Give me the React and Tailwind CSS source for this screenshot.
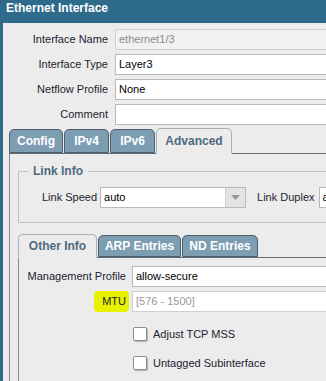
import React from 'react';

const Field = ({ label, value, disabled, placeholder }) => (
  <div className="flex items-center h-[21px]">
    <div className="w-[105px] shrink-0 text-right whitespace-nowrap text-[#23232f]">{label}</div>
    <div
      className={`ml-[7px] h-[21px] w-[240px] shrink-0 border flex items-center pl-[3px] ${
        disabled ? 'bg-[#f1f1f1] border-[#cfcfcf] text-[#8c8c8c]' : 'bg-white border-[#b9b9b9] text-black'
      }`}
    >
      {value || <span className="text-[#9a9a9a]">{placeholder}</span>}
    </div>
  </div>
);

const Tab = ({ label, active, width, tall }) => (
  <div
    className={`flex items-center justify-center rounded-t-[5px] border font-bold text-[12px] shrink-0 whitespace-nowrap ${
      active
        ? `bg-[#ececec] border-[#a9b2b8] border-b-[#ececec] text-[#4e6a80] -mb-px ${tall ? 'h-[26px]' : 'h-[24px]'}`
        : `bg-[#7d9db3] border-[#4f5e68] text-white ${tall ? 'h-[24px]' : 'h-[22px]'}`
    }`}
    style={{ width }}
  >
    {label}
  </div>
);

const Checkbox = ({ label }) => (
  <div className="flex items-center h-[16px]">
    <div className="w-[14px] h-[14px] shrink-0 bg-white border border-[#8d8d8d] rounded-[2px] shadow-[1px_1px_1px_rgba(0,0,0,0.25)]" />
    <span className="ml-[6px] whitespace-nowrap text-[#23232f]">{label}</span>
  </div>
);

export default function App() {
  return (
    <div
      className="w-[326px] h-[381px] overflow-hidden bg-[#2e6a8a] flex flex-col text-[11px] leading-[13px]"
      style={{ fontFamily: '"Liberation Sans", Arial, sans-serif' }}
    >
      <div className="h-[23px] shrink-0 pl-[6px] pt-[1px] text-white font-bold text-[12px] leading-[14px]">
        Ethernet Interface
      </div>

      <div className="flex-1 ml-[3px] bg-[#ececec] pt-[6px] overflow-hidden">
        <div className="flex flex-col gap-[4px]">
          <Field label="Interface Name" value="ethernet1/3" disabled />
          <Field label="Interface Type" value="Layer3" />
          <Field label="Netflow Profile" value="None" />
          <Field label="Comment" value="" />
        </div>

        <div className="mt-[3px] ml-[6px]">
          <div className="flex items-end gap-[1px] h-[26px] border-b border-[#5d6c76]">
            <Tab label="Config" width={54} tall />
            <Tab label="IPv4" width={45} tall />
            <Tab label="IPv6" width={45} tall />
            <Tab label="Advanced" width={76} active tall />
          </div>

          <div className="border-l border-[#8a8a8a] pl-[8px] pt-[10px] h-[240px]">
            <fieldset className="border border-[#c2c2c2] w-[340px] pb-[14px]">
              <legend className="ml-[9px] px-[5px] font-bold text-[12px] leading-[14px] text-[#4e6a80]">
                Link Info
              </legend>
              <div className="flex items-center mt-[9px] pl-[23px] whitespace-nowrap">
                <span className="shrink-0 text-[#23232f]">Link Speed</span>
                <div className="ml-[3px] flex shrink-0 h-[21px] border border-[#b9b9b9] bg-white">
                  <div className="w-[124px] pl-[3px] flex items-center text-black">auto</div>
                  <div className="w-[20px] bg-[#e3e3e3] border-l border-[#cfcfcf] flex items-center justify-center">
                    <svg width="9" height="5" viewBox="0 0 9 5">
                      <path d="M0 0 L9 0 L4.5 5 Z" fill="#8d9aa3" />
                    </svg>
                  </div>
                </div>
                <span className="ml-[11px] shrink-0 text-[#23232f]">Link Duplex</span>
                <div className="ml-[4px] shrink-0 h-[21px] w-[40px] border border-[#b9b9b9] bg-white pl-[3px] flex items-center text-black">
                  auto
                </div>
              </div>
            </fieldset>

            <div className="mt-[11px]">
              <div className="flex items-end gap-[1px] h-[24px] border-b border-[#5d6c76]">
                <Tab label="Other Info" width={79} active />
                <Tab label="ARP Entries" width={83} />
                <Tab label="ND Entries" width={76} />
              </div>

              <div className="border-l border-[#8a8a8a] pt-[8px] h-[140px]">
                <div className="flex flex-col gap-[4px]">
                  <div className="flex items-center h-[21px]">
                    <div className="w-[107px] shrink-0 text-right whitespace-nowrap text-[#23232f]">Management Profile</div>
                    <div className="ml-[6px] h-[21px] w-[220px] shrink-0 border border-[#b9b9b9] bg-white pl-[3px] flex items-center text-black">
                      allow-secure
                    </div>
                  </div>
                  <div className="flex items-center h-[21px]">
                    <div className="w-[107px] shrink-0 flex justify-end">
                      <span className="bg-[#e8f200] rounded-[4px] pl-[8px] pr-[3px] -mr-[3px] py-[4px] text-[#23232f]">
                        MTU
                      </span>
                    </div>
                    <div className="ml-[6px] h-[21px] w-[220px] shrink-0 border border-[#cfcfcf] bg-white pl-[3px] flex items-center text-[#9a9a9a]">
                      [576 - 1500]
                    </div>
                  </div>
                </div>
                <div className="ml-[114px] mt-[14px] flex flex-col gap-[13px]">
                  <Checkbox label="Adjust TCP MSS" />
                  <Checkbox label="Untagged Subinterface" />
                </div>
              </div>
            </div>
          </div>
        </div>
      </div>
    </div>
  );
}
